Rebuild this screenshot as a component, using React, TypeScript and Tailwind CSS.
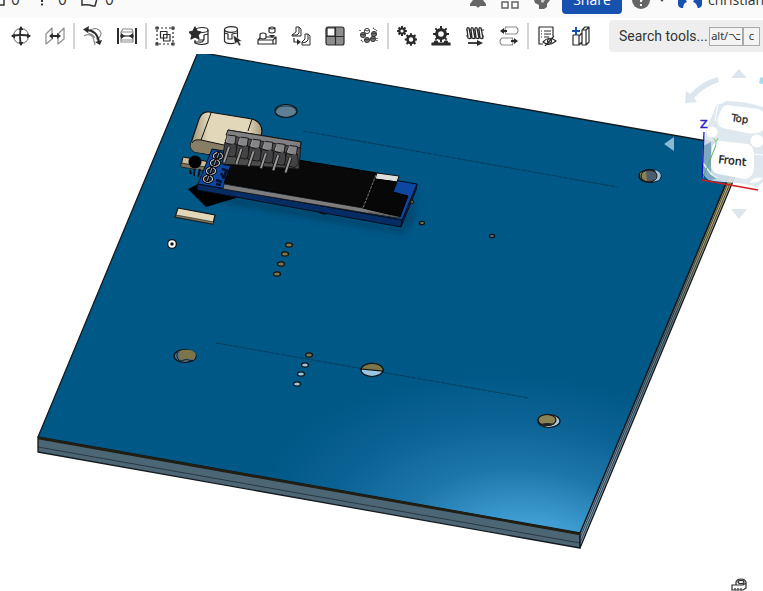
import React from 'react';

interface ToolProps {
    label: string;
    children: React.ReactNode;
}

const DARK = '#2b2b2b';
const GREY = '#8c8c8c';

const Tool = ({ label, children }: ToolProps) => (
    <button type="button" aria-label={label} className="flex h-8 w-[34px] shrink-0 items-center justify-center rounded hover:bg-gray-100">
        <svg width="20" height="20" viewBox="0 0 20 20" fill="none" stroke={DARK} strokeWidth="1.2" strokeLinejoin="round">
            {children}
        </svg>
    </button>
);

const Separator = () => <div className="mx-px h-[26px] w-[2px] shrink-0 bg-[#d4d4d4]" />;

// toothed wheel, used by the relation tools
const Gear = ({ x, y, r, tooth, width }: { x: number; y: number; r: number; tooth: number; width: number }) => (
    <g>
        {[0, 45, 90, 135].map((a) => (
            <line key={a} x1={x - r - tooth} x2={x + r + tooth} y1={y} y2={y} strokeWidth={2} transform={`rotate(${a} ${x} ${y})`} />
        ))}
        <circle cx={x} cy={y} r={r - width / 2} fill="white" strokeWidth={width} />
    </g>
);

const Cylinder = () => (
    <>
        <ellipse cx="8" cy="3.5" rx="6.5" ry="2.8" fill="white" />
        <path d="M1.5 3.5V15C2.5 18.5 13.5 18.5 14.5 15V3.5" />
    </>
);

const Header = () => (
    <header className="flex h-[18px] shrink-0 items-end overflow-hidden bg-[#fafafa] text-[14px] leading-5 text-[#333]">
        <div className="flex h-9 flex-1 items-center">
            <div className="flex w-10 shrink-0 items-center gap-[6px]">
                <svg width="5" height="12" fill="none" stroke="#333" strokeWidth="1.5">
                    <path d="M0 1H4V11H0" />
                </svg>
                <span>0</span>
            </div>
            <div className="flex w-[41px] shrink-0 items-center gap-[14px]">
                <svg width="4" height="14" stroke="#333" strokeWidth="2">
                    <path d="M2 0V14" strokeDasharray="2 1.5" />
                </svg>
                <span>0</span>
            </div>
            <div className="flex items-center gap-[6px]">
                <svg width="18" height="14" fill="none" stroke="#333" strokeWidth="1.5">
                    <path d="M1 1V12Q7 11 12 13H14L17 2" />
                </svg>
                <span>0</span>
            </div>
            <div className="ml-auto flex items-center">
                <button type="button" aria-label="Notifications" className="mr-[14px]">
                    <svg width="18" height="18" viewBox="0 0 18 18" fill="#666">
                        <path d="M9 0Q15 1 14 9L17 13V15H11Q9 18 7 15H1V13L4 9Q3 1 9 0Z" />
                    </svg>
                </button>
                <button type="button" aria-label="Apps" className="mr-[14px]">
                    <svg width="18" height="18" viewBox="0 0 18 18" fill="none" stroke="#666" strokeWidth="1.5">
                        <path d="M1 1H7V7H1ZM11 1H17V7H11ZM1 11H7V17H1ZM11 11H17V17H11Z" />
                    </svg>
                </button>
                <button type="button" aria-label="Learning center" className="mr-[11px]">
                    <svg width="18" height="18" viewBox="0 0 18 18" fill="#666">
                        <path d="M1 9Q0 1 9 0Q18 1 17 9L14 13V16L11 18H6V14L2 12Z" />
                        <path d="M8 8L10 7L12 9L10 12L8 11Z" fill="#ccc" />
                    </svg>
                </button>
                <button type="button" className="h-7 w-[60px] rounded bg-[#1651b0] font-['Open_Sans',sans-serif] text-[14px] text-white">
                    Share
                </button>
                <button type="button" aria-label="Help" className="ml-[10px] flex items-center gap-2">
                    <svg width="18" height="18" viewBox="0 0 18 18" fill="#666">
                        <circle cx="9" cy="9" r="9" />
                        <path d="M6 6Q6 3 9 3T12 6Q12 8 9 9V11M9 13V15" fill="none" stroke="white" strokeWidth="2" />
                    </svg>
                    <svg width="8" height="6" fill="#444">
                        <path d="M1 1H7L4 5Z" />
                    </svg>
                </button>
                <button type="button" className="ml-3 flex w-[85px] items-center gap-[6px] overflow-hidden">
                    <svg width="24" height="18" viewBox="0 0 24 18" className="shrink-0">
                        <path d="M0 0H24V14Q23 17 21 17H3Q1 17 0 14Z" fill="#1651b0" />
                        <path d="M5 18Q5 12 9 11Q7 8 7 4H17Q17 8 15 11Q19 12 20 18Z" fill="#fafafa" />
                    </svg>
                    <span className="font-['Open_Sans',sans-serif]">christian</span>
                </button>
            </div>
        </div>
    </header>
);

const Toolbar = () => (
    <div className="flex h-9 shrink-0 items-center overflow-hidden bg-white pl-1">
        <Tool label="Triad manipulator">
            <circle cx="10" cy="10" r="7.5" stroke={GREY} />
            <path d="M10 1Q8 10 10 19M1 10Q10 8 19 10" strokeWidth="1.8" />
            <path d="M7.5 4L10 0L12.5 4ZM7.5 16L10 20L12.5 16ZM4 7.5L0 10L4 12.5ZM16 7.5L20 10L16 12.5Z" fill={DARK} stroke="none" />
        </Tool>
        <Tool label="Mate">
            <path d="M1 8L7 2V13L1 18ZM13 8L19 2V13L13 18Z" stroke={GREY} />
            <path d="M6 10H14" strokeWidth="2" />
            <path d="M8 7L4 10L8 13ZM12 7L16 10L12 13Z" fill={DARK} stroke="none" />
        </Tool>
        <Separator />
        <Tool label="Revolute">
            <path d="M1 10Q6 7 10 11L12 19M5 7Q10 8 12 12M7 4Q15 0 18 7Q18 12 13 13" stroke={GREY} />
            <path d="M3 4Q14 4 16 16" strokeWidth="2" />
            <path d="M0 3.5L6 0L5 7ZM12 16L19 14L17 19Z" fill={DARK} stroke="none" />
        </Tool>
        <Tool label="Slider limits">
            <path d="M1 2V18M19 2V18" strokeWidth="2" />
            <path d="M4 6L6 3H15L16 6V16H4ZM4 6H16M4 14H16" stroke={GREY} />
            <path d="M3 10H17" />
            <path d="M4 7L8 10L4 13ZM16 7L12 10L16 13Z" fill={DARK} stroke="none" />
        </Tool>
        <Separator />
        <Tool label="Group">
            <path d="M2 2H18V18H2Z" strokeDasharray="2 2" />
            <path d="M5.5 5.5H12V12H5.5ZM8.5 8.5H15V15H8.5Z" />
            <path d="M1 1H3V3H1ZM17 1H19V3H17ZM1 17H3V19H1ZM17 17H19V19H17Z" />
        </Tool>
        <Tool label="Insert standard content">
            <ellipse cx="13" cy="4" rx="6" ry="2.5" />
            <path d="M19 4V17Q13 20 6 17V14M9 14H15V9L19 8M5 16H10Q15 17 15 12" />
            <path d="M6 1L8 5L12 6L9 9L10 13L6 11L2 13L3 9L0 6L4 5Z" fill={DARK} stroke={DARK} />
        </Tool>
        <Tool label="Select part">
            <Cylinder />
            <path d="M1 7L5 8V13H9V8L14.5 7" />
            <path d="M10 9L19 15L16 15.5L18 19L16 20L14 16L12 18Z" fill={DARK} stroke="white" strokeWidth=".5" />
        </Tool>
        <Tool label="Replicate">
            <path d="M1 14L4 11H19V18H1ZM1 14H16L19 11M16 14V18" />
            <path d="M3 8Q6 6 9 8V12Q6 14 3 12Z" fill="white" />
            <path d="M12 2Q15 0 18 2V6Q15 8 12 6ZM12 2Q15 4 18 2" fill="white" />
            <path d="M12 9H18L15 12Z" fill={DARK} stroke="none" />
        </Tool>
        <Tool label="Snap mode">
            <path d="M1 9L5 6V1H8L10 3V10H1ZM11 16L14 13V8H17L19 10V19H11ZM1 9H6L8 7V1M11 17L15 16L17 14V8" strokeWidth="1" />
            <path d="M3 12V16H7" />
            <path d="M6 13L10 16L6 19Z" fill={DARK} stroke="none" />
        </Tool>
        <Tool label="Linear pattern">
            <rect x="1" y="1" width="18" height="18" rx="2" fill="#8d8d8d" />
            <rect x="2" y="2" width="8" height="8" fill="white" />
            <path d="M10.5 1V19M1 10.5H19" />
        </Tool>
        <Tool label="Circular pattern">
            {[[8, 5], [4, 9], [15, 8], [8, 14], [14, 13]].map(([x, y], i) => (
                <g key={i} strokeWidth=".9">
                    <circle cx={x} cy={y} r="2.6" fill={i === 0 ? 'white' : '#777'} />
                    <path d={`M${x - 2} ${y - 1}L${x} ${y}L${x + 2} ${y - 1}`} />
                </g>
            ))}
            <path d="M1 4V6M14 2L18 5M18 12V15M2 14L4 16" strokeDasharray="1 1" />
        </Tool>
        <Separator />
        <Tool label="Gear relation">
            <Gear x={5} y={5} r={3.6} tooth={1.3} width={2} />
            <Gear x={14} y={13.5} r={4.8} tooth={1.5} width={2.6} />
        </Tool>
        <Tool label="Rack and pinion">
            <Gear x={10} y={8} r={6} tooth={2} width={3.2} />
            <path d="M1 19V17H3L4 15H6L7 17H13L14 15H16L17 17H19V19Z" fill={DARK} />
        </Tool>
        <Tool label="Screw relation">
            <path d="M1 4H19M1 10H19" strokeWidth="1" />
            <path
                d="M2 3Q2 1 4 2L6 12Q5 13 3 12ZM6 3Q6 1 8 2L10 12Q9 13 7 12ZM10 3Q10 1 12 2L14 12Q13 13 11 12ZM14 3Q14 1 16 2L18 12Q17 13 15 12Z"
                fill="white"
                strokeWidth="1.3"
            />
            <path d="M3 17H14" strokeWidth="1.8" />
            <path d="M12 14L18 17L12 20Z" fill={DARK} stroke="none" />
        </Tool>
        <Tool label="Linear relation">
            <path d="M6 1H17Q19 2 19 4.5T17 8H6M7 1Q5 4 7 8M14 12H3Q1 13 1 15.5T3 19H14M13 12Q15 15 13 19" stroke={GREY} />
            <path d="M3 5H8M12 15H17" strokeWidth="1.8" />
            <path d="M5 2L1 5L5 8ZM15 12L19 15L15 18Z" fill={DARK} stroke="none" />
        </Tool>
        <Separator />
        <Tool label="Hide in list">
            <path d="M6 18H2V1H16V10M4 5H5M7 5H14M4 8H5M7 8H14M4 11H5M7 11H12" />
            <path d="M6 16Q12 9 19 15Q12 21 6 16ZM8 20L17 10" />
            <circle cx="12.5" cy="15" r="2" />
        </Tool>
        <Tool label="Create part in context">
            <path d="M2 9V19H8V9M8 10L11 7V16L8 19M11 4L14 1H18V16L15 19H11V4M11 4H15L18 1M15 4V19M2 9H8" />
            <path d="M5 1V9M1 5H9" stroke="#1651b0" strokeWidth="2" />
        </Tool>
        <button type="button" className="ml-[11px] flex h-8 flex-1 items-center rounded-l bg-[#eee] pl-[10px] whitespace-nowrap text-[#333]">
            <span className="w-[90px] shrink-0 text-left font-['Roboto',sans-serif] text-[14px]">Search tools...</span>
            <span className="flex shrink-0 text-[11px] leading-4">
                <kbd className="flex h-[19px] w-[34px] items-center justify-center border border-[#aaa] bg-[#f4f4f4] font-['Noto_Sans','DejaVu_Sans',sans-serif]">alt/⌥</kbd>
                <kbd className="flex h-[19px] w-[17px] items-center justify-center border border-[#aaa] bg-[#f4f4f4] font-['Noto_Sans',sans-serif]">c</kbd>
            </span>
        </button>
    </div>
);

const mountHoles = [
    { x: 286, y: 111, top: '#56788f', bottom: '#5f7f95' },
    { x: 650, y: 176, top: '#8b8253', bottom: '#4d5c69' },
    { x: 185, y: 356, top: '#7b7549', bottom: '#4e6f84' },
    { x: 372, y: 370, top: '#7b7549', bottom: '#9ac5e0' },
    { x: 549, y: 421, top: '#8b8253', bottom: '#a9cbe2' },
];

const vias = [
    [289, 245, '#7b7549'],
    [285, 254, '#7b7549'],
    [281, 264, '#7b7549'],
    [277, 274, '#7b7549'],
    [309, 355, '#7b7549'],
    [305, 365, '#9ac5e0'],
    [301, 374, '#9ac5e0'],
    [297, 384, '#9ac5e0'],
    [422, 223, '#7b7549'],
    [492, 236, '#56788f'],
] as const;

const MountHole = ({ x, y, top, bottom }: (typeof mountHoles)[number]) => (
    <g stroke="#111" strokeWidth="1.2">
        <ellipse cx={x} cy={y} rx="11" ry="6.5" fill={bottom} />
        {x === 372 && <path d="M361 369A11 6.5 0 0 1 383 371Z" fill={top} />}
        {x === 286 && <path d="M276 111Q277 106 286 106Q295 106 296 111" fill="none" stroke="#233d4c" strokeWidth="1" />}
        {x === 185 && (
            <>
                <path d="M180 351Q177 356 181 360Q188 357 194 360Q199 352 190 350Q184 349 180 351Z" fill={top} stroke="none" />
                <path d="M178 352Q175 357 180 361Q186 358 193 361" fill="none" strokeWidth=".8" />
            </>
        )}
        {x === 650 && (
            <>
                <path d="M655 170Q664 173 659 180L653 182Q659 176 655 170Z" fill="#9ac5e0" stroke="none" />
                <path d="M640 173L646 171L647 181Q639 180 640 173Z" fill={top} stroke="none" />
                <ellipse cx="649" cy="176" rx="8" ry="6" fill="none" strokeWidth="1" />
            </>
        )}
        {x === 549 && (
            <>
                <ellipse cx="547" cy="420" rx="9" ry="5.5" fill={top} />
                <path d="M541 424Q548 422 554 424Q548 428 541 424Z" fill="#222" stroke="none" />
            </>
        )}
    </g>
);

const UsbConnector = () => (
    <g stroke="#111" strokeWidth="1.2">
        <path d="M209 112L252 119Q262 122 262 132L257 154L223 157L195 152Q189 149 191 143L199 119Q202 111 209 112Z" fill="url(#cream)" />
        <path d="M191 143Q193 138 201 140L224 145V156L195 152Q189 149 191 143Z" fill="#887e65" stroke="none" />
        <path d="M211 113L201 140L224 145M252 119L248 131M192 143Q194 139 201 140" fill="none" strokeWidth="1" />
    </g>
);

const DisplayModule = () => (
    <g strokeLinejoin="round">
        <path d="M188 189L206 207L236 198L230 185L198 184Z" fill="#000" />
        <path d="M317 211Q323 216 329 213Z" fill="#222" stroke="#111" />
        <path d="M198 184L402 220L401 227L197 190Z" fill="#052c63" stroke="#050d1a" />
        <path d="M417 184L402 220L401 227L416 190Z" fill="#08295c" stroke="#050d1a" />
        <path d="M212 149L417 184L402 220L198 184Z" fill="#0d48a0" stroke="#050d1a" />
        <path d="M237 150L377 173L363 208L224 183Z" fill="#090909" stroke="#000" />
        <path d="M224 184L363 208L399 216L398 218L366 213L223 189Z" fill="#7d7d7d" stroke="#111" strokeWidth=".8" />
        <path d="M377 173L399 176L397 182L375 179Z" fill="#ddd" stroke="#111" />
        <path d="M375 179L397 182L393 192L408 196L400 217L363 208Z" fill="#070707" stroke="#000" />
        <path d="M376 175L363 208" stroke="#999" strokeWidth=".8" strokeDasharray="3 1" />
        <path d="M368 212L399 217" stroke="#555" strokeWidth=".7" />
        {[[218, 156], [215, 163], [211, 171], [208, 179]].map(([x, y]) => (
            <g key={y}>
                <ellipse cx={x} cy={y} rx="4.5" ry="3.3" fill="#17345e" stroke="#000" strokeWidth="2.8" />
                <ellipse cx={x} cy={y} rx="4.5" ry="3.3" fill="none" stroke="#c9c9c9" strokeWidth="1.2" />
                <path d={`M${x + 1} ${y - 4}L${x - 1} ${y + 3}`} stroke="#000" strokeWidth="3" />
                <path d={`M${x + 1} ${y - 3}L${x - 1} ${y + 2}`} stroke="#888" strokeWidth="1.2" />
            </g>
        ))}
        <path d="M224 164L230 165M222 169L229 171M221 173L224 179M226 171L224 178M216 180L222 182M216 184L221 185" stroke="#02112b" strokeWidth="2.5" />
    </g>
);

const PinHeader = () => (
    <g stroke="#111" strokeWidth=".9" strokeLinejoin="round">
        <path d="M228 130L301 142L299 169L222 164Z" fill="#4c4c4e" />
        <path d="M228 130L301 142L300 148L226 135Z" fill="#808082" />
        {[0, 1, 2, 3, 4, 5].map((i) => (
            <g key={i} transform={`translate(${i * 12.3} ${i * 2.1})`}>
                <path d="M228 135L236 136L235 144L227 143L225 141Z" fill="#858587" />
                <path d="M225 142L228 144L236 144L237 154L233 157L223 155Z" fill="#434345" />
                <path d="M228 135L226 142L234 144" fill="none" stroke="#aaa" strokeWidth=".7" />
                <path d="M229 147L224 162" stroke="#111" strokeWidth="3.5" />
                <path d="M229 147L224 162" stroke="#999" strokeWidth="2" />
            </g>
        ))}
    </g>
);

const BoardModel = () => (
    <svg viewBox="0 54 763 537" className="block w-full" role="img" aria-label="Circuit board assembly">
        <defs>
            <radialGradient id="shine" gradientUnits="userSpaceOnUse" cx="0" cy="0" r="1" gradientTransform="translate(535 565) rotate(10) scale(290 190)">
                <stop offset="0" stopColor="#55b1e5" />
                <stop offset=".25" stopColor="#3d9bd0" />
                <stop offset=".5" stopColor="#1d76aa" />
                <stop offset=".75" stopColor="#0b6294" />
                <stop offset="1" stopColor="#005887" />
            </radialGradient>
            <linearGradient id="side" x1="0" y1="1" x2="0" y2="0">
                <stop offset="0" stopColor="#7fa2bb" />
                <stop offset=".55" stopColor="#627b8a" />
                <stop offset=".8" stopColor="#b4aa70" />
                <stop offset="1" stopColor="#d0c27b" />
            </linearGradient>
            <linearGradient id="cream" x1="0" y1="0" x2="1" y2="0">
                <stop offset="0" stopColor="#9b9074" />
                <stop offset=".25" stopColor="#e2d8b9" />
                <stop offset=".8" stopColor="#e2d8b9" />
                <stop offset="1" stopColor="#a69b7c" />
            </linearGradient>
            <filter id="soft">
                <feGaussianBlur stdDeviation="3" />
            </filter>
        </defs>
        <g stroke="#141a1e" strokeWidth="1.3" strokeLinejoin="round">
            <path d="M38 437L580 533V548L38 452Z" fill="#4d6676" />
            <path d="M580 533L741 148L741 162L580 548Z" fill="url(#side)" />
            <path d="M38 447L580 543" strokeWidth=".6" />
            <path d="M580 538L741 152M580 543L741 157" strokeWidth=".7" />
            <path d="M198 52L741 147L580 533L38 437Z" fill="url(#shine)" />
            <path d="M38 438L580 534" stroke="#211f13" strokeWidth="2.5" />
        </g>
        <path d="M303 131L617 187M216 343L529 398" stroke="#05344d" strokeWidth=".8" strokeDasharray="5 1" />
        {mountHoles.map((hole) => (
            <MountHole key={hole.x} {...hole} />
        ))}
        {vias.map(([x, y, fill]) => (
            <ellipse key={`${x}-${y}`} cx={x} cy={y} rx={y === 236 || y === 223 ? 2.5 : 3.5} ry={y === 236 || y === 223 ? 1.7 : 2.2} fill={fill} stroke="#111" strokeWidth="1.2" />
        ))}
        <path d="M200 190L401 228L418 188L413 220L403 234L230 204Z" fill="#00304f" opacity=".5" filter="url(#soft)" />
        <UsbConnector />
        <path d="M183 157L210 162L206 170L181 166Z" fill="#c9bd9a" stroke="#111" />
        <path d="M181 163L206 167L205 171L181 167Z" fill="#7b7259" stroke="#111" strokeWidth=".7" />
        <circle cx="195" cy="162" r="6.5" fill="#000" />
        <path d="M190 170L191 174M195 169L194 176M200 169L198 177" stroke="#111" strokeWidth="2" />
        <path d="M197 169L196 175" stroke="#1769bb" strokeWidth="2" />
        <DisplayModule />
        <circle cx="412" cy="202" r="1.5" fill="#7b7549" stroke="#111" />
        <PinHeader />
        <path d="M178 208L215 215L213 224L175 217Z" fill="#e2d8b9" stroke="#111" strokeWidth="1.2" />
        <path d="M176 215L214 222L213 224L175 217Z" fill="#83795d" stroke="#111" strokeWidth=".6" />
        <circle cx="172" cy="244" r="3" fill="#111" stroke="#111" strokeWidth="4" />
        <circle cx="172" cy="244" r="2.7" fill="#111" stroke="white" strokeWidth="2" />
    </svg>
);

const ViewCube = () => (
    <svg viewBox="655 58 108 170" className="absolute top-1 right-0 h-[170px] w-[108px] font-['DejaVu_Sans',sans-serif]" role="img" aria-label="View cube">
        <g fill="#dde6ed">
            <path d="M739 69L747 78H731Z" />
            <path d="M739 219L747 209H731Z" />
            <path d="M718 77L719 82Q704 87 694 98L697 102L685 103L686 91L690 94Q702 81 718 77Z" />
        </g>
        <path d="M763 77L760 78L759 83L763 84Z" fill="#a6daf2" />
        <path d="M664 144L674 137V151Z" fill="#8bb7d0" />
        <path d="M717 104L721 104L726 101Q745 101 763 107V182L757 187Q748 184 738 183Q718 182 709 180Q701 174 702 166L703 145L707 128Z" fill="#dce6ee" opacity=".92" />
        <path d="M703 146L711 142V174L717 179L710 180Q702 178 703 165Z" fill="#7fa8bf" />
        <path d="M703 163L711 174L717 178" fill="none" stroke="#e8f1f6" strokeWidth="1.5" />
        <path d="M718 104L715 121" stroke="white" />
        <path d="M727 105L758 109Q767 112 764 121L763 130Q757 135 747 133L723 128Q716 126 718 118L721 110Q723 106 727 105Z" fill="white" />
        <path d="M720 141L748 144Q753 146 754 153V170Q752 178 745 179L718 174Q711 172 711 165L712 148Q713 141 720 141Z" fill="white" />
        <circle cx="712" cy="132" r="5.5" fill="white" />
        <circle cx="757" cy="141" r="6.5" fill="white" />
        <path d="M753 154L763 155" stroke="white" />
        <path d="M749 183Q754 176 763 178L758 182Z" fill="white" />
        <path d="M702 180L716 145" stroke="#54b554" />
        <path d="M702 180L704 132" stroke="#1515c8" strokeWidth="1.3" />
        <path d="M702 180L758 190" stroke="#d01c1c" strokeWidth="1.3" />
        <text x="700" y="128" fontSize="11" fill="#2323cc" stroke="#2323cc" strokeWidth=".5">Z</text>
        <text x="713" y="145" fontSize="9" fill="#7bc67b">Y</text>
        <text x="731" y="121" fontSize="10" fill="#222" stroke="#222" strokeWidth=".3" transform="rotate(8 731 121)">Top</text>
        <text x="718" y="163" fontSize="11" fill="#111" stroke="#111" strokeWidth=".3" transform="rotate(6 718 163)">Front</text>
    </svg>
);

const App = () => {
    return (
        <div className="flex min-h-screen flex-col overflow-hidden bg-white font-['Inter',sans-serif]">
            <Header />
            <Toolbar />
            <main className="relative flex-1">
                <BoardModel />
                <ViewCube />
                <button type="button" aria-label="Measure" className="absolute right-4 bottom-0">
                    <svg width="16" height="13" viewBox="0 0 16 13" fill="none" stroke={DARK} strokeWidth="1.2">
                        <path d="M1 7H12L15 5V10L12 12H1ZM5 7V4Q6 1 10 1T15 4V6M4 10V12M7 10V12M10 10V12" />
                        <ellipse cx="10" cy="4" rx="3" ry="1.7" />
                    </svg>
                </button>
            </main>
        </div>
    );
};

export default App;
